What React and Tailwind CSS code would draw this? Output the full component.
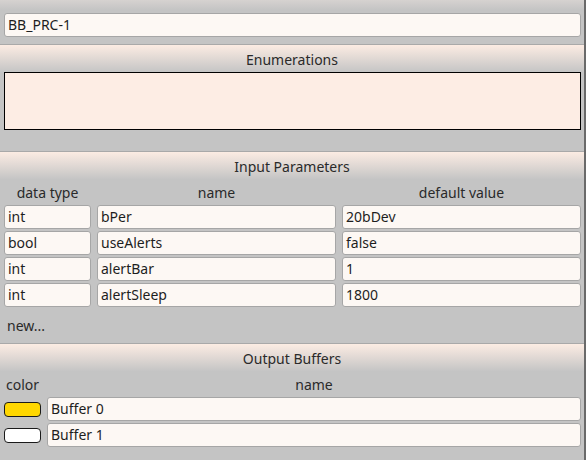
import React from "react";

const params = [
  { type: "int", name: "bPer", value: "20bDev" },
  { type: "bool", name: "useAlerts", value: "false" },
  { type: "int", name: "alertBar", value: "1" },
  { type: "int", name: "alertSleep", value: "1800" },
];

const buffers = [
  { color: "bg-[#ffd700]", name: "Buffer 0" },
  { color: "bg-white", name: "Buffer 1" },
];

function Field({ value, className = "" }) {
  return (
    <div
      className={`h-[24px] flex items-center pl-[3px] bg-[#fdf8f4] border border-[#a6a6a6] rounded-[3px] text-[#1e1e1e] truncate ${className}`}
    >
      {value}
    </div>
  );
}

function SectionHeader({ title }) {
  return (
    <div className="border-t border-[#a9a9a9] h-[28px] pt-[2px] bg-gradient-to-b from-[#fcece3] to-[#c5c5c5] flex items-center justify-center text-[#2a2a2a]">
      {title}
    </div>
  );
}

function Label({ children }) {
  return (
    <div className="h-[24px] pt-[3px] flex items-center justify-center text-[#2a2a2a]">
      {children}
    </div>
  );
}

export default function App() {
  return (
    <div
      className="w-[586px] h-[460px] overflow-hidden bg-[#c4c4c4] flex text-[14px] leading-none"
      style={{ fontFamily: '"Noto Sans", "Open Sans", sans-serif' }}
    >
      <div className="flex-1 flex flex-col">
        <div className="h-[10px] bg-gradient-to-b from-[#d6d2d0] to-[#c4c4c4]" />

        <div className="pt-[3px] pl-[4px] pr-[3px]">
          <Field value="BB_PRC-1" />
        </div>

        <div className="mt-[7px]">
          <SectionHeader title="Enumerations" />
        </div>
        <div className="pl-[4px] pr-[3px]">
          <div className="h-[58px] bg-[#fdede4] border border-black" />
        </div>

        <div className="mt-[21px]">
          <SectionHeader title="Input Parameters" />
        </div>
        <div className="pl-[4px] pr-[3px]">
          <div className="grid grid-cols-[87px_1fr_1fr] gap-x-[6px] gap-y-[2px]">
            <Label>data type</Label>
            <Label>name</Label>
            <Label>default value</Label>
            {params.map((p) => (
              <React.Fragment key={p.name}>
                <Field value={p.type} />
                <Field value={p.name} />
                <Field value={p.value} />
              </React.Fragment>
            ))}
          </div>
          <div className="h-[36px] pt-[1px] flex items-center pl-[3px] text-[#2a2a2a]">new...</div>
        </div>

        <SectionHeader title="Output Buffers" />
        <div className="pl-[4px] pr-[3px]">
          <div className="grid grid-cols-[37px_1fr] gap-x-[6px] gap-y-[2px]">
            <Label>color</Label>
            <Label>name</Label>
            {buffers.map((b) => (
              <React.Fragment key={b.name}>
                <div className="h-[24px] flex items-center">
                  <div className={`w-[37px] h-[15px] rounded-[4px] border border-[#1a1a1a] ${b.color}`} />
                </div>
                <Field value={b.name} />
              </React.Fragment>
            ))}
          </div>
        </div>
      </div>
      <div className="w-[2px] bg-[#6a6a6a]" />
    </div>
  );
}
